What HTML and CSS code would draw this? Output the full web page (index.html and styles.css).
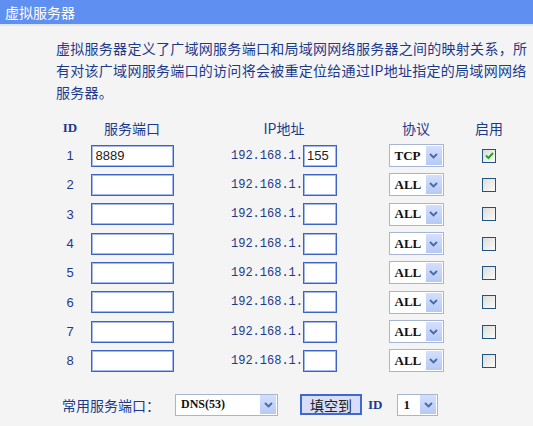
FILE: index.html
```html
<!DOCTYPE html>
<html lang="zh-CN">
<head>
<meta charset="utf-8">
<title>虚拟服务器</title>
<link rel="stylesheet" href="styles.css">
</head>
<body>
<div class="titlebar">虚拟服务器</div>
<p class="intro">虚拟服务器定义了广域网服务端口和局域网网络服务器之间的映射关系，所<br>有对该广域网服务端口的访问将会被重定位给通过IP地址指定的局域网网络<br>服务器。</p>

<div class="grid">
  <div class="th th-id">ID</div>
  <div class="th">服务端口</div>
  <div class="th">IP地址</div>
  <div class="th">协议</div>
  <div class="th">启用</div>

  <div class="id">1</div>
  <input class="port" type="text" value="8889">
  <div class="ip"><span class="ip-pre">192.168.1.</span><input class="ip-in" type="text" value="155"></div>
  <div class="sel sel-proto"><span class="val">TCP</span><span class="arrow"><svg width="9" height="6" viewBox="0 0 9 6"><path d="M1 1 L4.5 4.5 L8 1" fill="none" stroke="#4a69a6" stroke-width="1.8"/></svg></span></div>
  <div class="cb"><svg width="11" height="11" viewBox="0 0 11 11"><path d="M2 5.5 L4.5 8 L9 3" fill="none" stroke="#22a822" stroke-width="2"/></svg></div>

  <div class="id">2</div>
  <input class="port" type="text" value="">
  <div class="ip"><span class="ip-pre">192.168.1.</span><input class="ip-in" type="text" value=""></div>
  <div class="sel sel-proto"><span class="val">ALL</span><span class="arrow"><svg width="9" height="6" viewBox="0 0 9 6"><path d="M1 1 L4.5 4.5 L8 1" fill="none" stroke="#4a69a6" stroke-width="1.8"/></svg></span></div>
  <div class="cb"></div>

  <div class="id">3</div>
  <input class="port" type="text" value="">
  <div class="ip"><span class="ip-pre">192.168.1.</span><input class="ip-in" type="text" value=""></div>
  <div class="sel sel-proto"><span class="val">ALL</span><span class="arrow"><svg width="9" height="6" viewBox="0 0 9 6"><path d="M1 1 L4.5 4.5 L8 1" fill="none" stroke="#4a69a6" stroke-width="1.8"/></svg></span></div>
  <div class="cb"></div>

  <div class="id">4</div>
  <input class="port" type="text" value="">
  <div class="ip"><span class="ip-pre">192.168.1.</span><input class="ip-in" type="text" value=""></div>
  <div class="sel sel-proto"><span class="val">ALL</span><span class="arrow"><svg width="9" height="6" viewBox="0 0 9 6"><path d="M1 1 L4.5 4.5 L8 1" fill="none" stroke="#4a69a6" stroke-width="1.8"/></svg></span></div>
  <div class="cb"></div>

  <div class="id">5</div>
  <input class="port" type="text" value="">
  <div class="ip"><span class="ip-pre">192.168.1.</span><input class="ip-in" type="text" value=""></div>
  <div class="sel sel-proto"><span class="val">ALL</span><span class="arrow"><svg width="9" height="6" viewBox="0 0 9 6"><path d="M1 1 L4.5 4.5 L8 1" fill="none" stroke="#4a69a6" stroke-width="1.8"/></svg></span></div>
  <div class="cb"></div>

  <div class="id">6</div>
  <input class="port" type="text" value="">
  <div class="ip"><span class="ip-pre">192.168.1.</span><input class="ip-in" type="text" value=""></div>
  <div class="sel sel-proto"><span class="val">ALL</span><span class="arrow"><svg width="9" height="6" viewBox="0 0 9 6"><path d="M1 1 L4.5 4.5 L8 1" fill="none" stroke="#4a69a6" stroke-width="1.8"/></svg></span></div>
  <div class="cb"></div>

  <div class="id">7</div>
  <input class="port" type="text" value="">
  <div class="ip"><span class="ip-pre">192.168.1.</span><input class="ip-in" type="text" value=""></div>
  <div class="sel sel-proto"><span class="val">ALL</span><span class="arrow"><svg width="9" height="6" viewBox="0 0 9 6"><path d="M1 1 L4.5 4.5 L8 1" fill="none" stroke="#4a69a6" stroke-width="1.8"/></svg></span></div>
  <div class="cb"></div>

  <div class="id">8</div>
  <input class="port" type="text" value="">
  <div class="ip"><span class="ip-pre">192.168.1.</span><input class="ip-in" type="text" value=""></div>
  <div class="sel sel-proto"><span class="val">ALL</span><span class="arrow"><svg width="9" height="6" viewBox="0 0 9 6"><path d="M1 1 L4.5 4.5 L8 1" fill="none" stroke="#4a69a6" stroke-width="1.8"/></svg></span></div>
  <div class="cb"></div>
</div>

<div class="bottom">
  <span class="label">常用服务端口：</span>
  <div class="sel sel-common"><span class="val">DNS(53)</span><span class="arrow"><svg width="9" height="6" viewBox="0 0 9 6"><path d="M1 1 L4.5 4.5 L8 1" fill="none" stroke="#4a69a6" stroke-width="1.8"/></svg></span></div>
  <button class="fill" type="button">填空到</button>
  <span class="id-label">ID</span>
  <div class="sel sel-id"><span class="val">1</span><span class="arrow"><svg width="9" height="6" viewBox="0 0 9 6"><path d="M1 1 L4.5 4.5 L8 1" fill="none" stroke="#4a69a6" stroke-width="1.8"/></svg></span></div>
</div>
</body>
</html>
```
FILE: styles.css
```css
html, body {
  margin: 0;
  padding: 0;
}
body {
  width: 533px;
  height: 426px;
  overflow: hidden;
  background: #f4f4f4;
  font-family: "Noto Sans CJK SC", "Noto Sans", sans-serif;
  color: #1f3d8f;
}
.titlebar {
  height: 24px;
  line-height: 24px;
  background: #5f8ff0;
  border-bottom: 2px solid #dde7fb;
  color: #fff;
  font-size: 14px;
  padding-left: 5px;
}
.intro {
  margin: 11px 0 0 56px;
  font-size: 14px;
  line-height: 22px;
  letter-spacing: 0.28px;
  white-space: nowrap;
  color: #1c3a8c;
}
.grid {
  display: grid;
  margin: 12px 0 0 56px;
  grid-template-columns: 28px 96px 208px 56px 90px;
  grid-template-rows: 26px;
  grid-auto-rows: 29.33px;
  align-items: center;
  justify-items: center;
}
.th {
  font-size: 14px;
  color: #1c3a8c;
}
.th-id {
  font-family: "Liberation Serif", serif;
  font-weight: bold;
  font-size: 13px;
}
.id {
  font-family: "Liberation Sans", sans-serif;
  font-size: 13px;
  color: #1c3a8c;
}
.port, .ip-in {
  box-sizing: border-box;
  height: 22px;
  margin: 0;
  border: 1px solid #3b63c6;
  box-shadow: inset 0 0 0 1px #a3b9ee;
  background: #fff;
  padding: 0 4px;
  font-family: "Liberation Sans", sans-serif;
  font-size: 13px;
  color: #222;
  outline: none;
}
.port {
  width: 83px;
}
.ip {
  display: flex;
  align-items: center;
}
.ip-pre {
  font-family: "Liberation Mono", monospace;
  font-size: 12px;
  color: #1c3a8c;
  width: 72px;
}
.ip-in {
  width: 34px;
  padding: 0 3px;
}
.sel {
  box-sizing: border-box;
  display: flex;
  align-items: center;
  height: 23px;
  border: 1px solid #a6b6d2;
  box-shadow: inset 0 0 0 1px #fff;
  background: #fff;
}
.sel-proto {
  width: 55px;
}
.val {
  flex: 1;
  padding-left: 5px;
  font-family: "Liberation Serif", serif;
  font-weight: bold;
  font-size: 13px;
  color: #111;
}
.arrow {
  width: 16px;
  height: 19px;
  margin-right: 1px;
  background: linear-gradient(#d3dffd, #b6c9f6);
  display: flex;
  align-items: center;
  justify-content: center;
}
.cb {
  box-sizing: border-box;
  width: 14px;
  height: 14px;
  border: 1px solid #1f5483;
  background: linear-gradient(135deg, #dcdcd6, #fbfbfb);
  display: flex;
  align-items: center;
  justify-content: center;
}
.bottom {
  display: flex;
  align-items: center;
  height: 24px;
  margin: 17px 0 0 62px;
}
.label {
  font-size: 14px;
  color: #1c3a8c;
}
.sel-common {
  width: 103px;
  height: 22px;
  margin-left: 15px;
}
.sel-common .val {
  font-size: 12px;
}
.fill {
  box-sizing: border-box;
  width: 62px;
  height: 21px;
  margin-left: 22px;
  padding: 0;
  border: 2px solid #3f69d2;
  background: #d9def8;
  font-family: "Noto Sans CJK SC", sans-serif;
  font-size: 14px;
  line-height: 16px;
  color: #222;
}
.id-label {
  margin-left: 6px;
  font-family: "Liberation Serif", serif;
  font-weight: bold;
  font-size: 13px;
  color: #1c3a8c;
}
.sel-id {
  width: 41px;
  height: 22px;
  margin-left: 15px;
}
```
